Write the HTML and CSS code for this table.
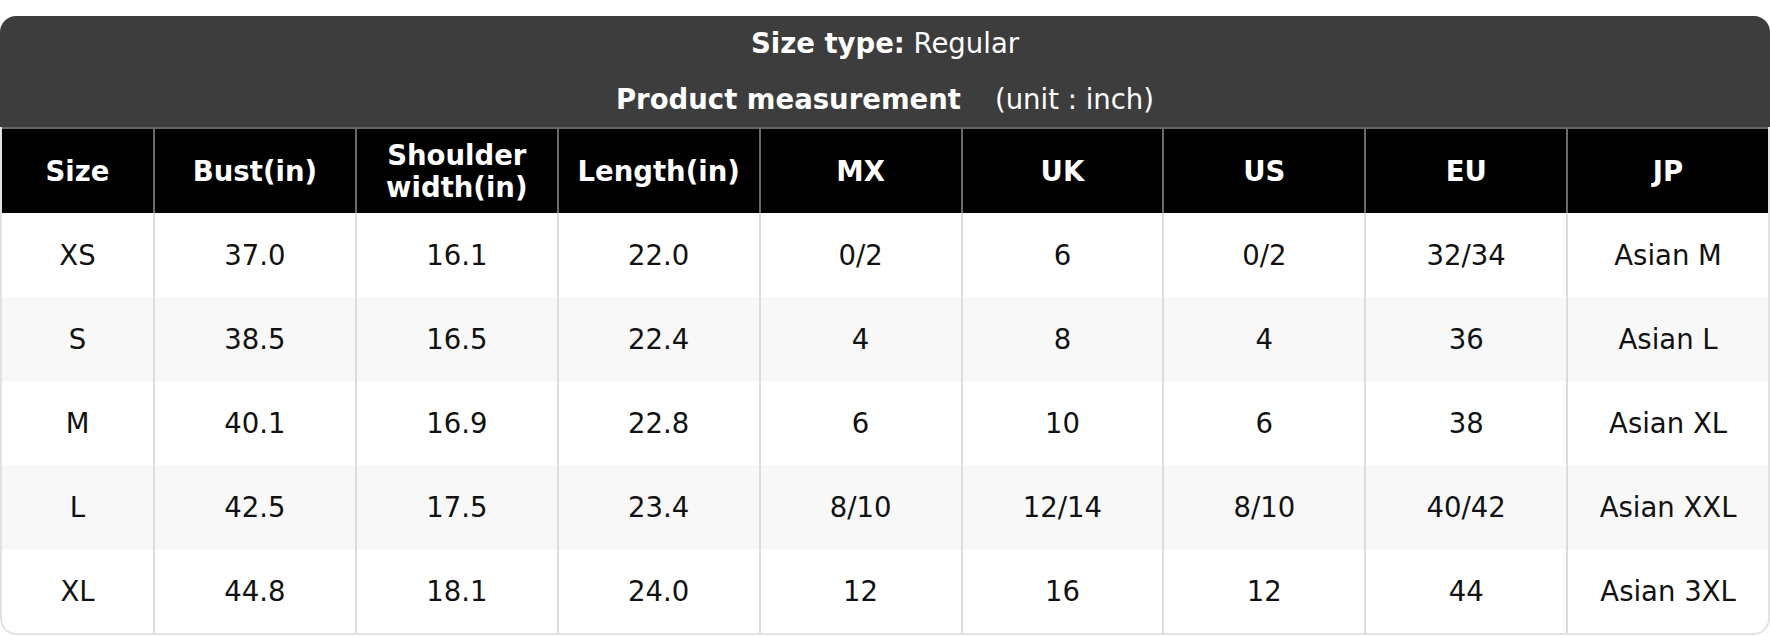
FILE: index.html
```html
<!DOCTYPE html>
<html lang="en">
<head>
<meta charset="utf-8">
<title>Size chart</title>
<link rel="stylesheet" href="styles.css">
</head>
<body>
<div class="page">
  <div class="card">
    <div class="title">
      <div class="title-line"><b>Size type:</b> Regular</div>
      <div class="title-line"><b>Product measurement</b><span class="unit">(unit : inch)</span></div>
    </div>
    <div class="body">
      <table class="chart">
        <colgroup>
          <col class="c-first">
          <col><col><col><col><col><col><col><col>
        </colgroup>
        <thead>
          <tr>
            <th>Size</th><th>Bust(in)</th><th>Shoulder<br>width(in)</th><th>Length(in)</th><th>MX</th><th>UK</th><th>US</th><th>EU</th><th>JP</th>
          </tr>
        </thead>
        <tbody>
          <tr><td>XS</td><td>37.0</td><td>16.1</td><td>22.0</td><td>0/2</td><td>6</td><td>0/2</td><td>32/34</td><td>Asian M</td></tr>
          <tr><td>S</td><td>38.5</td><td>16.5</td><td>22.4</td><td>4</td><td>8</td><td>4</td><td>36</td><td>Asian L</td></tr>
          <tr><td>M</td><td>40.1</td><td>16.9</td><td>22.8</td><td>6</td><td>10</td><td>6</td><td>38</td><td>Asian XL</td></tr>
          <tr><td>L</td><td>42.5</td><td>17.5</td><td>23.4</td><td>8/10</td><td>12/14</td><td>8/10</td><td>40/42</td><td>Asian XXL</td></tr>
          <tr><td>XL</td><td>44.8</td><td>18.1</td><td>24.0</td><td>12</td><td>16</td><td>12</td><td>44</td><td>Asian 3XL</td></tr>
        </tbody>
      </table>
    </div>
  </div>
</div>
</body>
</html>
```
FILE: styles.css
```css
html, body {
  margin: 0;
  padding: 0;
  background: #ffffff;
}
body {
  font-family: "DejaVu Sans", "Liberation Sans", sans-serif;
  font-size: 27.5px;
  color: #111;
}
.page {
  padding-top: 16px;
}
.card {
  width: 1770px;
  border-radius: 16px;
  overflow: hidden;
}
.title {
  background: #3d3d3d;
  color: #fff;
  text-align: center;
  height: 111px;
  display: flex;
  flex-direction: column;
}
.title-line {
  height: 55.5px;
  line-height: 55.5px;
  white-space: nowrap;
}
.title-line b {
  font-weight: bold;
}
.unit {
  margin-left: 34px;
}
.body {
  border: 2px solid #e2e2e2;
  border-top: none;
  border-radius: 0 0 16px 16px;
  overflow: hidden;
}
.chart {
  width: 100%;
  table-layout: fixed;
  border-collapse: separate;
  border-spacing: 0;
}
.c-first {
  width: 151px;
}
.chart th,
.chart td {
  text-align: center;
  padding: 0;
  white-space: nowrap;
}
.chart th {
  background: #000;
  color: #fff;
  font-weight: bold;
  height: 84px;
  line-height: 32px;
  border-top: 2px solid #666;
  border-left: 2px solid #6a6a6a;
}
.chart td {
  height: 84px;
  color: #111;
  border-left: 2px solid #dddddd;
}
.chart th:first-child,
.chart td:first-child {
  border-left: none;
}
.chart tbody tr:nth-child(even) td {
  background: #f8f8f8;
}
```
